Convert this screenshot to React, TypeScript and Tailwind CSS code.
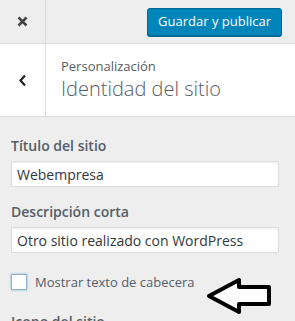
import React from "react";

function ArrowMark() {
  return (
    <svg width="66" height="38" viewBox="0 0 66 38" className="absolute left-[206px] top-[277px]">
      <polygon
        points="3,19 33,3 33,10 63,10 63,27 33,27 33,35"
        fill="#fff"
        stroke="#000"
        strokeWidth="4"
        strokeLinejoin="round"
      />
    </svg>
  );
}

export default function App() {
  return (
    <div
      className="relative w-[295px] h-[321px] overflow-hidden bg-[#eee] text-[#555d66]"
      style={{ fontFamily: '"Open Sans", sans-serif' }}
    >
      <div className="flex h-[44px] border-b border-[#ddd] bg-[#eee]">
        <div className="flex w-[46px] items-center justify-center border-r border-[#ddd]">
          <svg width="11" height="11" viewBox="0 0 11 11">
            <path d="M1.5 1.5 L9.5 9.5 M9.5 1.5 L1.5 9.5" stroke="#444" strokeWidth="2.5" />
          </svg>
        </div>
        <div className="flex flex-1 items-center justify-end pr-[13px]">
          <button className="h-[28px] rounded-[3px] border border-[#006799] bg-[#0085ba] px-[10px] text-[13px] text-white shadow-[0_1px_0_#006799]">
            Guardar y publicar
          </button>
        </div>
      </div>

      <div className="flex h-[73px] border-b border-[#ddd] bg-white">
        <div className="flex w-[46px] items-center justify-center border-r border-[#ddd]">
          <svg width="9" height="13" viewBox="0 0 9 13">
            <path d="M7 1.5 L2.5 6.5 L7 11.5" fill="none" stroke="#222" strokeWidth="2.2" />
          </svg>
        </div>
        <div className="flex flex-col pl-[15px] pt-[13px]">
          <span className="text-[13px] leading-[18px] text-[#555d66]">Personalización</span>
          <span className="text-[20px] font-light leading-[28px] text-[#555d66]">Identidad del sitio</span>
        </div>
      </div>

      <div className="flex flex-col px-[11px] pt-[19px]">
        <label className="text-[14px] font-semibold leading-[20px]">Título del sitio</label>
        <input
          readOnly
          value="Webempresa"
          className="mt-[5px] h-[26px] w-[268px] border border-[#ddd] bg-white px-[5px] text-[14px] text-[#32373c] shadow-[inset_0_1px_2px_rgba(0,0,0,0.07)] outline-none"
        />
        <label className="mt-[15px] text-[14px] font-semibold leading-[20px]">Descripción corta</label>
        <input
          readOnly
          value="Otro sitio realizado con WordPress"
          className="mt-[5px] h-[26px] w-[268px] border border-[#ddd] bg-white px-[5px] text-[14px] text-[#32373c] shadow-[inset_0_1px_2px_rgba(0,0,0,0.07)] outline-none"
        />
        <div className="mt-[19px] flex items-center gap-[8px]">
          <span className="block h-[16px] w-[16px] border border-[#8fb3d1] bg-white shadow-[0_0_2px_rgba(30,140,190,0.6)]" />
          <span className="text-[13px] leading-[20px]">Mostrar texto de cabecera</span>
        </div>
        <label className="mt-[20px] text-[14px] font-semibold leading-[20px]">Icono del sitio</label>
      </div>

      <ArrowMark />
    </div>
  );
}
